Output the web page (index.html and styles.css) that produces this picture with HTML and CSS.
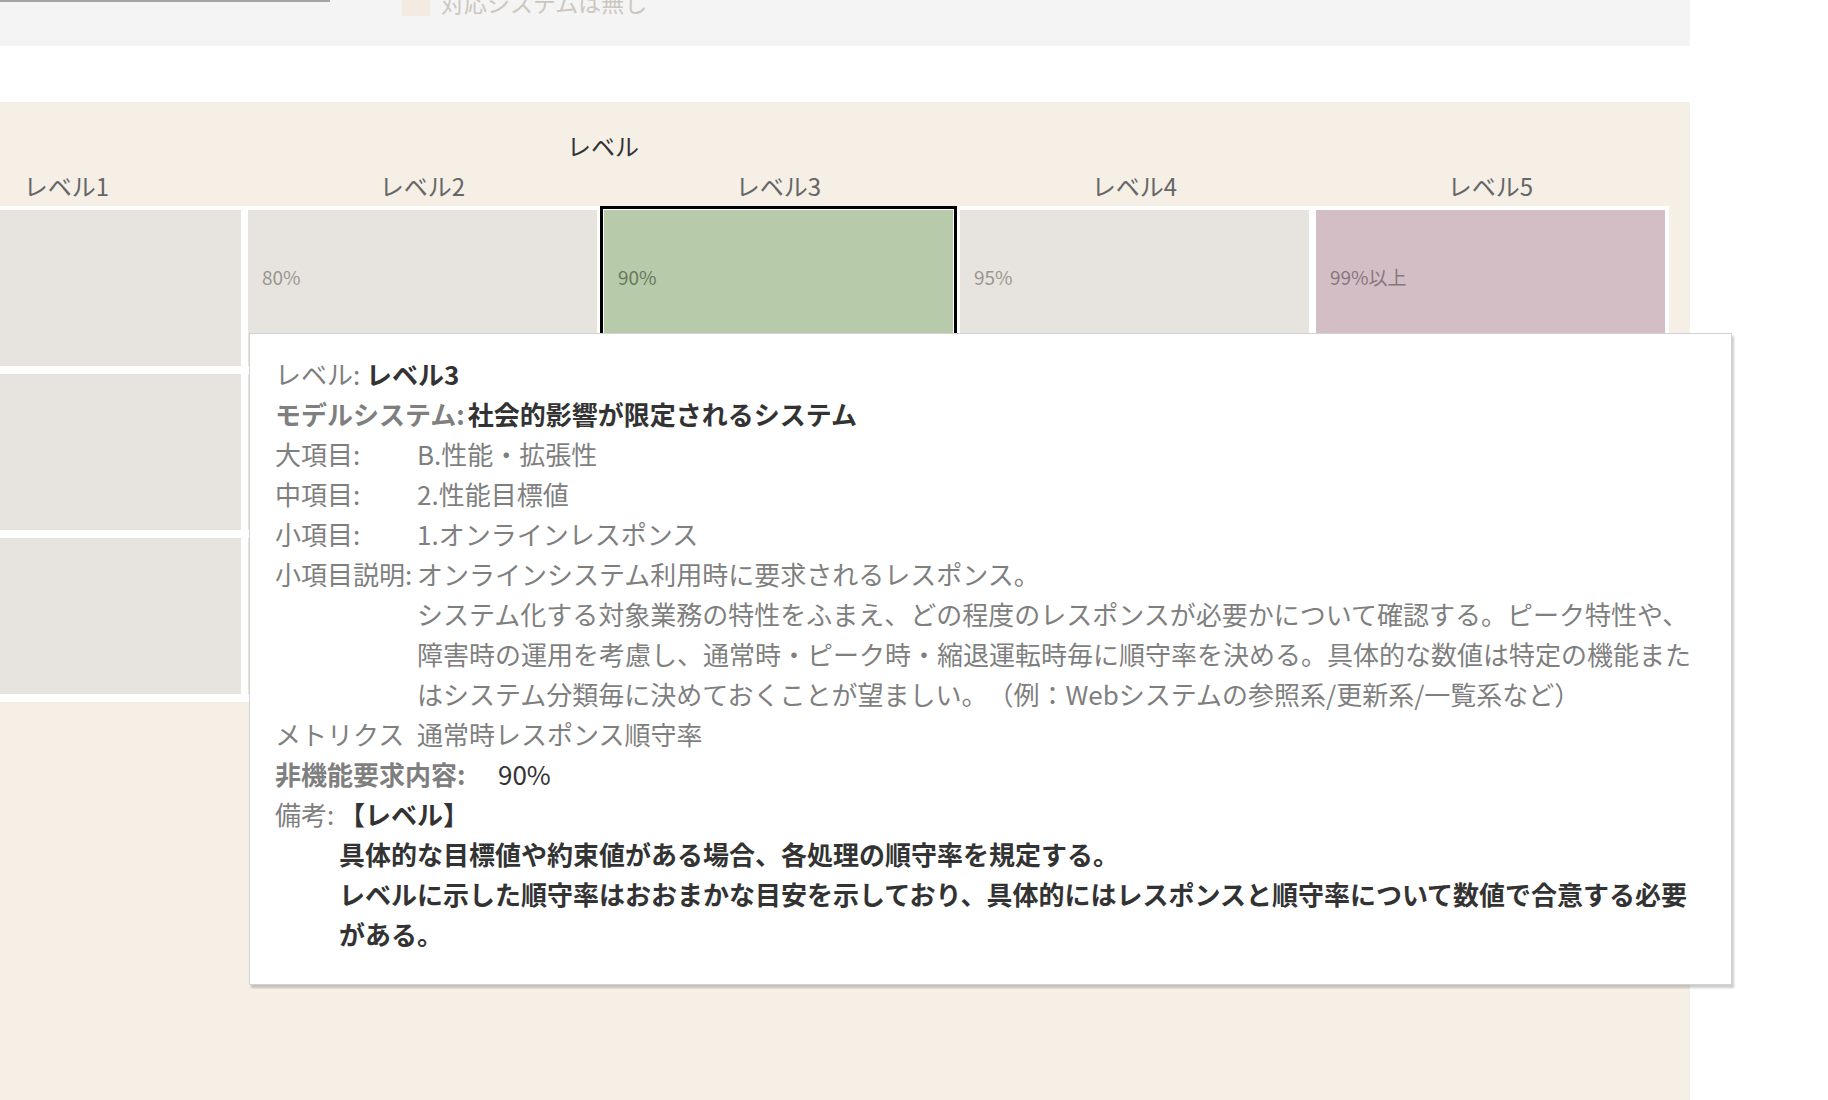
FILE: index.html
```html
<!DOCTYPE html>
<html lang="ja">
<head>
<meta charset="utf-8">
<title>レベル</title>
<link rel="stylesheet" href="styles.css">
</head>
<body>
<div class="top-panel">
  <div class="top-line"></div>
  <div class="legend">
    <div class="legend-swatch"></div>
    <div class="legend-text">対応システムは無し</div>
  </div>
</div>
<div class="gap-area"></div>
<div class="beige">
  <div class="title">レベル</div>
  <div class="col-heads">
    <div class="col-head">レベル1</div>
    <div class="col-head">レベル2</div>
    <div class="col-head">レベル3</div>
    <div class="col-head">レベル4</div>
    <div class="col-head">レベル5</div>
  </div>
  <div class="grid">
    <div class="cell gray"></div>
    <div class="cell gray"><span class="lbl">80%</span></div>
    <div class="cell green selected"><span class="lbl">90%</span></div>
    <div class="cell gray"><span class="lbl">95%</span></div>
    <div class="cell purple"><span class="lbl">99%以上</span></div>
    <div class="cell gray"></div>
    <div class="cell gray"></div>
    <div class="cell gray"></div>
    <div class="cell gray"></div>
    <div class="cell gray"></div>
    <div class="cell gray"></div>
    <div class="cell gray"></div>
    <div class="cell gray"></div>
    <div class="cell gray"></div>
    <div class="cell gray"></div>
  </div>
</div>

<div class="tooltip">
  <div class="line"><span class="k">レベル:</span> <span class="vb">レベル3</span></div>
  <div class="line"><span class="kb">モデルシステム:</span><span class="vb gapl">社会的影響が限定されるシステム</span></div>
  <div class="line row"><span class="k klab">大項目:</span><span class="k">B.性能・拡張性</span></div>
  <div class="line row"><span class="k klab">中項目:</span><span class="k">2.性能目標値</span></div>
  <div class="line row"><span class="k klab">小項目:</span><span class="k">1.オンラインレスポンス</span></div>
  <div class="row">
    <span class="k klab line">小項目説明:</span>
    <div class="k">
      <div class="line">オンラインシステム利用時に要求されるレスポンス。</div>
      <div class="line">システム化する対象業務の特性をふまえ、どの程度のレスポンスが必要かについて確認する。ピーク特性や、</div>
      <div class="line">障害時の運用を考慮し、通常時・ピーク時・縮退運転時毎に順守率を決める。具体的な数値は特定の機能また</div>
      <div class="line">はシステム分類毎に決めておくことが望ましい。（例：Webシステムの参照系/更新系/一覧系など）</div>
    </div>
  </div>
  <div class="line row"><span class="k klab">メトリクス</span><span class="k">通常時レスポンス順守率</span></div>
  <div class="line row"><span class="kb klab-wide">非機能要求内容:</span><span class="v">90%</span></div>
  <div class="row">
    <span class="k klab-short line">備考:</span>
    <div class="vb">
      <div class="line">【レベル】</div>
      <div class="line">具体的な目標値や約束値がある場合、各処理の順守率を規定する。</div>
      <div class="line">レベルに示した順守率はおおまかな目安を示しており、具体的にはレスポンスと順守率について数値で合意する必要</div>
      <div class="line">がある。</div>
    </div>
  </div>
</div>
</body>
</html>
```

FILE: styles.css
```css
html, body {
  margin: 0;
  padding: 0;
}
body {
  width: 1828px;
  height: 1100px;
  overflow: hidden;
  background: #ffffff;
  font-family: "Noto Sans CJK JP", "Noto Sans", sans-serif;
  position: relative;
  text-spacing-trim: space-all;
}

.top-panel {
  width: 1690px;
  height: 46px;
  background: #f4f4f4;
  display: flex;
  align-items: flex-start;
  overflow: hidden;
}
.top-line {
  width: 330px;
  height: 2px;
  background: #a4a4a4;
}
.legend {
  margin-left: 72px;
  display: flex;
  align-items: flex-start;
  gap: 11px;
}
.legend-swatch {
  width: 28px;
  height: 16px;
  background: #f3ebe1;
  border-radius: 0 0 2px 2px;
}
.legend-text {
  font-size: 23px;
  line-height: 23px;
  margin-top: -9px;
  color: #cdc6be;
  white-space: nowrap;
}

.gap-area {
  height: 56px;
}

.beige {
  width: 1690px;
  height: 998px;
  background: #f5efe6;
  overflow: hidden;
}
.title {
  width: 1206px;
  margin-top: 29px;
  height: 30px;
  line-height: 30px;
  text-align: center;
  font-size: 24px;
  color: #333333;
}
.col-heads {
  margin-top: 10px;
  margin-left: -112px;
  padding: 0 4px;
  display: grid;
  grid-template-columns: repeat(5, 349px);
  column-gap: 7px;
  height: 30px;
}
.col-head {
  text-align: center;
  line-height: 30px;
  font-size: 24px;
  color: #666666;
  white-space: nowrap;
}
.grid {
  margin-top: 5px;
  margin-left: -112px;
  width: max-content;
  background: #ffffff;
  padding: 4px 4px 8px 4px;
  display: grid;
  grid-template-columns: repeat(5, 349px);
  grid-auto-rows: 156px;
  column-gap: 7px;
  row-gap: 8px;
}
.cell {
  padding: 55px 0 0 14px;
  box-sizing: border-box;
}
.lbl {
  font-size: 19px;
  line-height: 24px;
}
.gray { background: #e7e4df; color: #9a968f; }
.green { background: #b7caa9; color: #6a7862; }
.purple { background: #d3bec6; color: #87767e; }
.selected {
  outline: 3px solid #000000;
  outline-offset: 1px;
}

.tooltip {
  position: absolute;
  left: 249px;
  top: 333px;
  width: 1483px;
  height: 652px;
  box-sizing: border-box;
  background: #ffffff;
  border: 1px solid #d2d2d2;
  box-shadow: 2px 3px 2px rgba(0, 0, 0, 0.2);
  padding: 20px 20px 30px 25px;
  font-size: 26px;
  color: #7f7f7f;
}
.line {
  line-height: 40px;
  height: 40px;
  white-space: nowrap;
}
.row {
  display: flex;
  align-items: flex-start;
}
.k { color: #7f7f7f; font-weight: 400; }
.kb { color: #7f7f7f; font-weight: 700; }
.v { color: #333333; font-weight: 400; }
.vb { color: #333333; font-weight: 700; }
.gapl { margin-left: 3px; }
.klab {
  width: 142px;
  flex: none;
}
.klab-wide {
  width: 223px;
  flex: none;
}
.klab-short {
  width: 64px;
  flex: none;
}
```
